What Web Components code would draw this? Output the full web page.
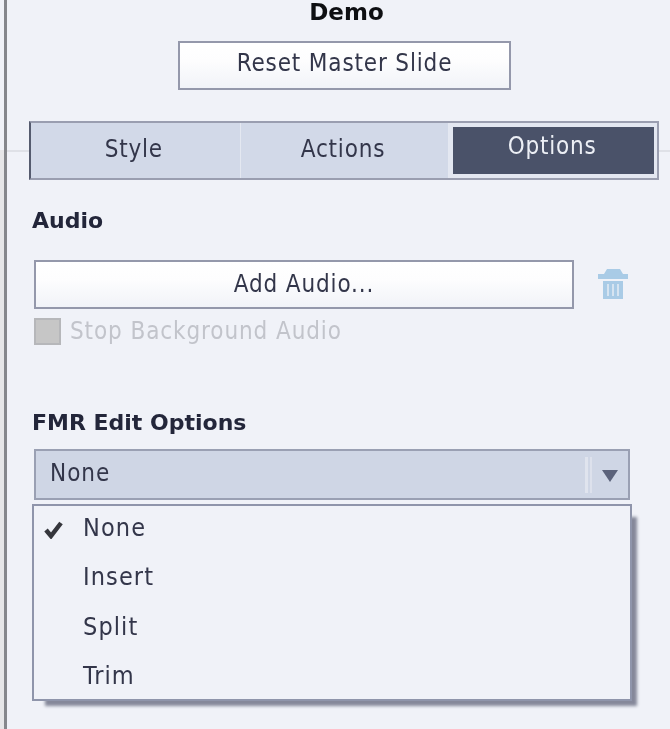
<!DOCTYPE html>
<html>
<head>
<meta charset="utf-8">
<style>
  html,body{margin:0;height:100%;overflow:hidden;background:#f0f2f8;}
  body{font-family:"DejaVu Sans","Liberation Sans",sans-serif;color:#33364a;
    background:linear-gradient(#f0f2f8 150px,#e6e6e8 150px);}
</style>
</head>
<body>
<option-panel>
  <panel-title>Demo</panel-title>
  <flat-button style="width:333px;height:49px;margin:16px auto 0 171px;">Reset Master Slide</flat-button>
  <tab-bar>
    <tab-item>Style</tab-item>
    <tab-item>Actions</tab-item>
    <tab-item selected>Options</tab-item>
  </tab-bar>
  <section-head style="margin-top:28px;">Audio</section-head>
  <audio-row>
    <flat-button style="width:540px;height:49px;--drop:2px;">Add Audio...</flat-button>
    <trash-icon></trash-icon>
  </audio-row>
  <check-row>Stop Background Audio</check-row>
  <section-head style="margin-top:65px;">FMR Edit Options</section-head>
  <drop-select>None</drop-select>
  <drop-menu>
    <menu-row checked>None</menu-row>
    <menu-row>Insert</menu-row>
    <menu-row>Split</menu-row>
    <menu-row>Trim</menu-row>
  </drop-menu>
</option-panel>

<script>
function shadow(el, html) {
  el.attachShadow({ mode: 'open' }).innerHTML = html;
}

class OptionPanel extends HTMLElement {
  constructor() {
    super();
    shadow(this, `<style>
      :host{display:block;height:729px;box-sizing:border-box;margin-left:4px;
        border-left:3px solid #85878c;background:#f0f2f8;width:666px;filter:blur(.45px);}
    </style><slot></slot>`);
  }
}
class PanelTitle extends HTMLElement {
  constructor() {
    super();
    shadow(this, `<style>
      :host{display:block;height:25px;text-align:center;font-weight:700;font-size:23px;line-height:25px;
        color:#0e0f12;margin-left:16px;}
    </style><slot></slot>`);
  }
}
class FlatButton extends HTMLElement {
  constructor() {
    super();
    shadow(this, `<style>
      :host{display:flex;align-items:center;justify-content:center;box-sizing:border-box;
        border:2px solid #9498ab;background:linear-gradient(#ffffff 0%,#fdfdfe 40%,#f1f3f8 100%);
        font-stretch:condensed;font-size:24px;letter-spacing:.85px;color:#33364a;padding-bottom:5px;}
      span{position:relative;top:var(--drop,0);}
    </style><span><slot></slot></span>`);
  }
}
class TabBar extends HTMLElement {
  constructor() {
    super();
    shadow(this, `<style>
      :host{display:flex;align-items:center;margin-top:31px;}
      .line{height:2px;background:#dfe1e7;}
      .l{width:22px;} .r{flex:1;}
      .tabs{display:flex;width:630px;height:59px;box-sizing:border-box;
        border:2px solid #9a9eb0;border-left-color:#555b6e;background:#d2d9e8;}
    </style><div class="line l"></div><div class="tabs"><slot></slot></div><div class="line r"></div>`);
  }
}
class TabItem extends HTMLElement {
  constructor() {
    super();
    shadow(this, `<style>
      :host{flex:0 0 33.333%;display:flex;box-sizing:border-box;border-left:1px solid #e4e8f1;
        font-stretch:condensed;font-size:24px;letter-spacing:.8px;color:#33364a;}
      :host(:first-child){border-left:0;}
      .in{flex:1;display:flex;align-items:center;justify-content:center;padding:0 3px 4px 0;}
      :host([selected]){background:#e3e7f1;padding:4px 3px 4px 4px;color:#eceff5;}
      :host([selected]) .in{background:#4a5269;padding-bottom:10px;}
    </style><div class="in"><slot></slot></div>`);
  }
}
class SectionHead extends HTMLElement {
  constructor() {
    super();
    shadow(this, `<style>
      :host{display:block;margin-left:25px;font-weight:700;font-size:22px;line-height:26px;color:#23263a;}
    </style><slot></slot>`);
  }
}
class AudioRow extends HTMLElement {
  constructor() {
    super();
    shadow(this, `<style>
      :host{display:flex;align-items:center;gap:24px;margin:26px 0 0 27px;}
    </style><slot></slot>`);
  }
}
class TrashIcon extends HTMLElement {
  constructor() {
    super();
    shadow(this, `<style>
      :host{display:block;width:30px;height:30px;margin-top:-1px;}
      svg{display:block;}
    </style><svg width="30" height="30" viewBox="0 0 30 30">
      <path fill="#a9cbe6" d="M9 0h13l3 5h5v5H0V5h6zM5 12h20v18H5z"/>
      <path fill="#d6e4f1" d="M9 15h2v12H9zM14 15h2v12h-2zM19 15h2v12h-2z"/>
    </svg>`);
  }
}
class CheckRow extends HTMLElement {
  constructor() {
    super();
    shadow(this, `<style>
      :host{display:flex;align-items:center;gap:9px;margin:9px 0 0 27px;font-stretch:condensed;font-size:24px;letter-spacing:.9px;color:#c2c4cb;height:27px;}
      .box{width:27px;height:27px;box-sizing:border-box;background:#c6c6c6;border:2px solid #b6b7ba;}
      .t{padding-bottom:1px;}
    </style><span class="box"></span><span class="t"><slot></slot></span>`);
  }
}
class DropSelect extends HTMLElement {
  constructor() {
    super();
    shadow(this, `<style>
      :host{display:flex;align-items:center;box-sizing:border-box;width:596px;height:51px;margin:13px 0 0 27px;
        border:2px solid #9aa0b3;background:#cfd6e5;font-stretch:condensed;font-size:24px;letter-spacing:1px;color:#33364a;padding-left:14px;}
      .txt{flex:1;padding-bottom:4px;}
      .sep{height:36px;border-left:3px solid #e0e4ee;border-right:2px solid #dde1ec;width:2px;}
      svg{display:block;margin:0 10px 0 10px;position:relative;top:1px;}
    </style><span class="txt"><slot></slot></span><span class="sep"></span>
    <svg width="16" height="12" viewBox="0 0 16 12"><path fill="#5c637b" d="M0 0h16L8 12z"/></svg>`);
  }
}
class DropMenu extends HTMLElement {
  constructor() {
    super();
    shadow(this, `<style>
      :host{display:block;box-sizing:border-box;width:600px;height:197px;margin:4px 0 0 25px;padding:0;
        border:2px solid #8f95ab;background:#f0f2f8;box-shadow:9px 9px 3px -4px #85889a;}
    </style><slot></slot>`);
  }
}
class MenuRow extends HTMLElement {
  constructor() {
    super();
    shadow(this, `<style>
      :host{display:flex;align-items:center;height:49.25px;padding-left:10px;font-stretch:condensed;font-size:25px;letter-spacing:1.1px;color:#33364a;}
      .mark{width:20px;height:18px;margin-right:19px;margin-top:-1px;visibility:hidden;}
      :host([checked]) .mark{visibility:visible;}
      .txt{padding-bottom:6px;}
      svg{display:block;}
    </style><span class="mark"><svg width="20" height="18" viewBox="0 0 20 18"><path fill="none" stroke="#35363c" stroke-width="4.5" d="M2 9l5 6L17 2"/></svg></span><span class="txt"><slot></slot></span>`);
  }
}

customElements.define('option-panel', OptionPanel);
customElements.define('panel-title', PanelTitle);
customElements.define('flat-button', FlatButton);
customElements.define('tab-bar', TabBar);
customElements.define('tab-item', TabItem);
customElements.define('section-head', SectionHead);
customElements.define('audio-row', AudioRow);
customElements.define('trash-icon', TrashIcon);
customElements.define('check-row', CheckRow);
customElements.define('drop-select', DropSelect);
customElements.define('drop-menu', DropMenu);
customElements.define('menu-row', MenuRow);
</script>
</body>
</html>
